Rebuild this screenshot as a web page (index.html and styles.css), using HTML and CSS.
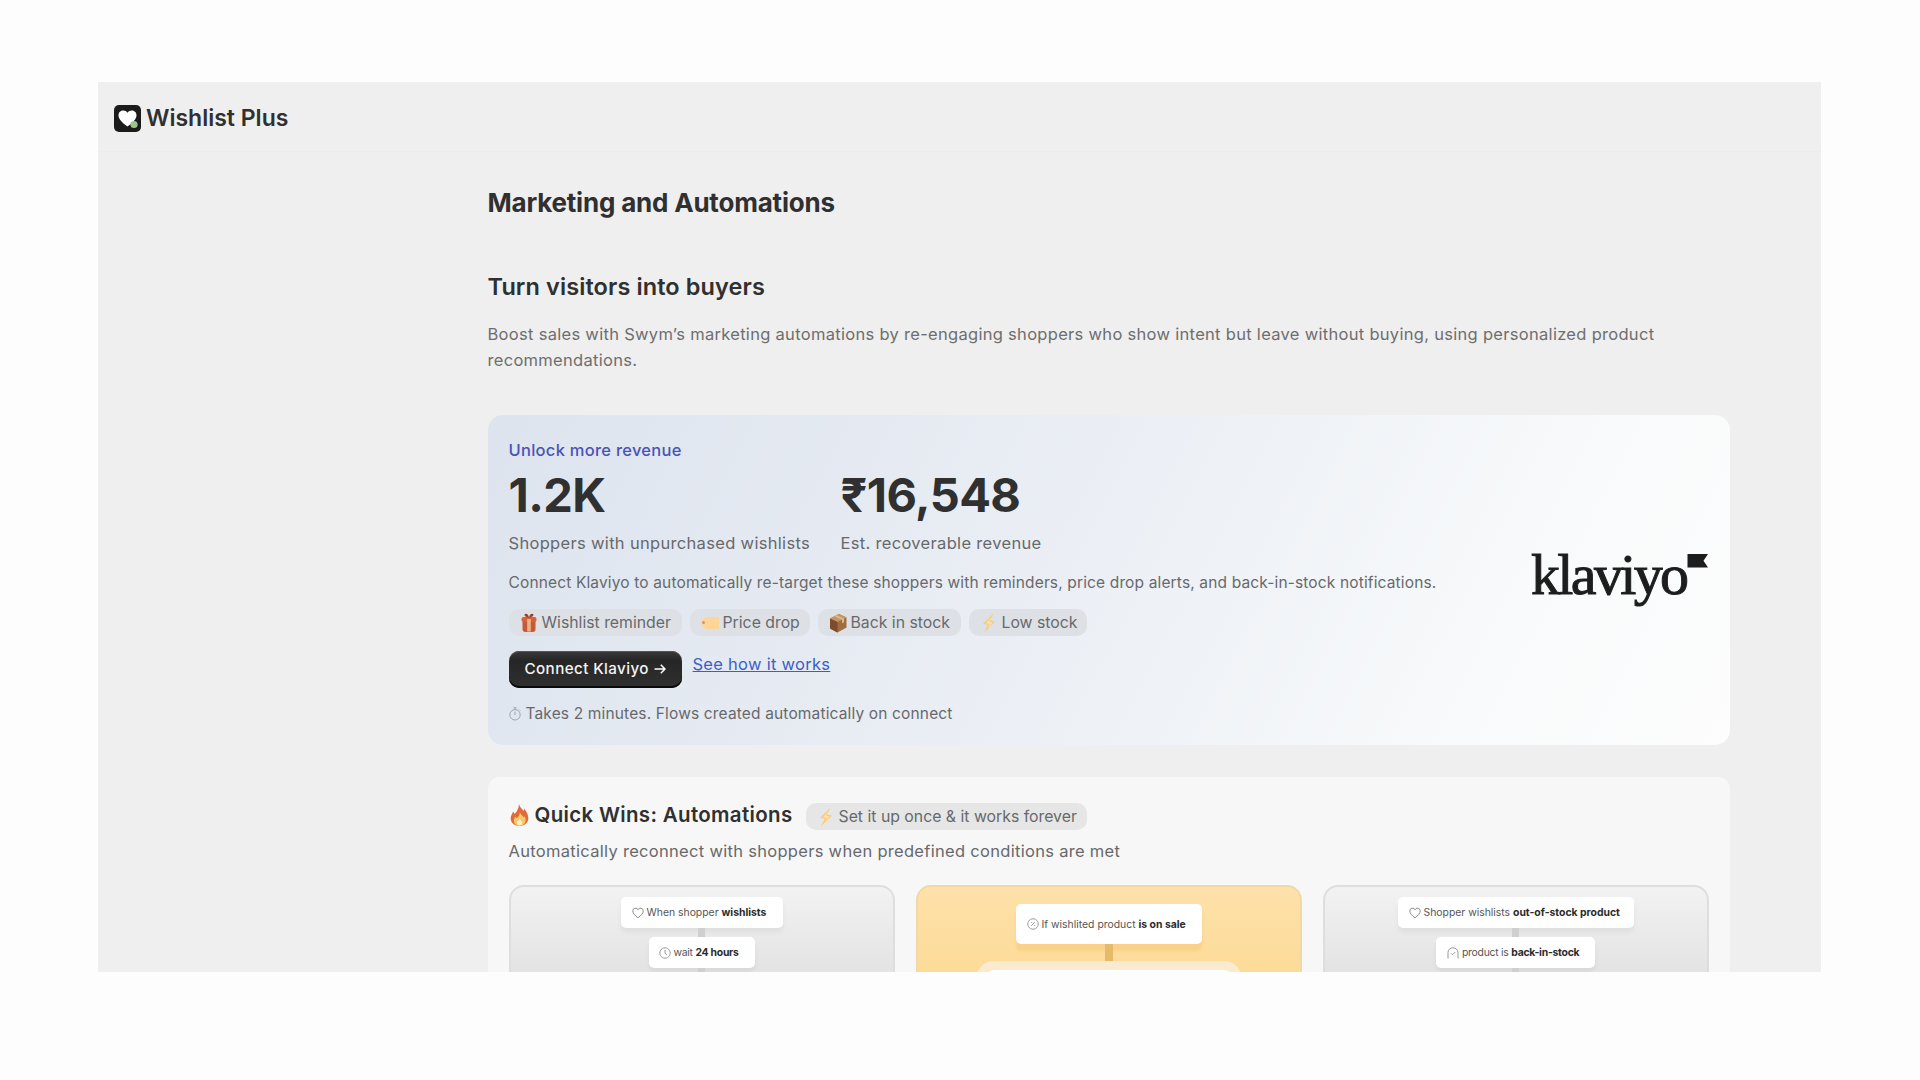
FILE: index.html
```html
<!DOCTYPE html>
<html lang="en">
<head>
  <meta charset="UTF-8" />
  <meta name="viewport" content="width=device-width, initial-scale=1.0" />
  <title>Wishlist Plus</title>
  <link rel="stylesheet" href="styles.css">
</head>
<body>

  <svg class="sprite" width="0" height="0">
    <symbol id="bolt" viewBox="0 0 16 20">
      <path d="M12.5 .5 2 10.8l4.8 1L3 19.5 14 8.6l-4.9-1z" fill="#fbc97c" />
      <path d="M11 3 5 10.2l3.600.7-2 4.600 5-6.300-3.800-.8z" fill="#fde2a6" />
    </symbol>
    <symbol id="heart" viewBox="0 0 12 12">
      <path d="M6 10.800C2.500 8.200.8 6.200.8 3.900A2.700 2.700 0 0 1 6 2.800a2.700 2.700 0 0 1 5.200 1.100c0 2.300-1.700 4.300-5.200 6.900z" fill="none" stroke="#8d8d8d" />
    </symbol>
  </svg>

  <div class="window">
    <header class="topbar">
      <svg class="app-logo" viewBox="0 0 27 27">
        <rect width="27" height="27" rx="5" fill="#1b1b1b" />
        <path d="M13.500 21.500C8 17.500 4.500 14 4.500 10.200c0-5.400 6.800-6.200 9-2.500 2.200-3.700 9-2.900 9 2.500 0 3.800-3.500 7.300-9 11.300z" fill="#fff" />
        <circle cx="20" cy="19.500" r="3.600" fill="#9cc48c" />
      </svg>
      <span class="app-name">Wishlist Plus</span>
    </header>

    <main class="content">
      <h1>Marketing and Automations</h1>
      <h2>Turn visitors into buyers</h2>
      <p class="intro">Boost sales with Swym’s marketing automations by re-engaging shoppers who show intent but leave without buying, using personalized product recommendations.</p>

      <section class="hero">
        <div class="hero-body">
          <div class="eyebrow">Unlock more revenue</div>
          <div class="stats">
            <div class="stat">
              <div class="stat-value">1.2K</div>
              <div class="stat-label">Shoppers with unpurchased wishlists</div>
            </div>
            <div class="stat">
              <div class="stat-value">₹16,548</div>
              <div class="stat-label">Est. recoverable revenue</div>
            </div>
          </div>
          <p class="hero-text">Connect Klaviyo to automatically re-target these shoppers with reminders, price drop alerts, and back-in-stock notifications.</p>
          <div class="chips">
            <div class="chip chip-gift">
              <svg viewBox="0 0 18 20">
                <rect x="2.500" y="6" width="13" height="13" rx="3" fill="#c65a38" />
                <rect x="1.500" y="4" width="15" height="5" rx="2" fill="#d4633c" />
                <rect x="7.200" y="6" width="3.600" height="12.500" fill="#e9b485" />
                <path d="M9 4.500C4 4.500 3.500.8 6 .8c1.600 0 2.600 1.800 3 3.700.4-1.900 1.400-3.700 3-3.700 2.500 0 2 3.700-3 3.700z" fill="#9e3d22" />
              </svg>
              <span>Wishlist reminder</span>
            </div>
            <div class="chip chip-tag">
              <svg viewBox="0 0 18 20">
                <path d="M5 4h11.500q1.500 0 1.500 1.500v9q0 1.500-1.500 1.500H5L.5 12V8z" fill="#fdd596" />
                <circle cx="2.500" cy="9.500" r="1.500" fill="#e5925e" />
              </svg>
              <span>Price drop</span>
            </div>
            <div class="chip chip-box">
              <svg viewBox="0 0 18 20">
                <path d="M1 5.500 10 1l7.500 3.500v10L8.500 19.500 1 15.500z" fill="#a06c40" />
                <path d="M1 5.500 10 1l7.500 3.500-9 4.500z" fill="#c79563" />
                <path d="M8.500 9v10.500L1 15.500v-10z" fill="#7b4d2e" />
                <path d="m5.500 3.300 7.600 3.500v3.500l2-1V5.700L7.700 2.200z" fill="#dfb988" />
              </svg>
              <span>Back in stock</span>
            </div>
            <div class="chip chip-low">
              <svg viewBox="0 0 16 20"><use href="#bolt" /></svg>
              <span>Low stock</span>
            </div>
          </div>
          <div class="actions">
            <div class="button">
              <span>Connect Klaviyo</span>
              <svg viewBox="0 0 12 12"><path d="M.5 6h10.500M6.800 1.800 11 6l-4.200 4.200" fill="none" stroke="#fff" stroke-width="1.500" /></svg>
            </div>
            <a class="link" href="#">See how it works</a>
          </div>
          <div class="note">
            <svg viewBox="0 0 12 14">
              <circle cx="6" cy="7.800" r="5.200" fill="none" stroke="#9a9da1" stroke-width=".9" />
              <path d="M6 4.500v3.500M4.500 .8h3M6 .8v1.800M10.200 2.600l1 1" fill="none" stroke="#9a9da1" stroke-width=".9" />
            </svg>
            <span>Takes 2 minutes. Flows created automatically on connect</span>
          </div>
        </div>
        <svg class="klaviyo" viewBox="0 -10 180 80">
          <text x="2" y="50" textLength="158" lengthAdjust="spacing">klaviyo</text>
          <path d="M158.500 10H179l-4.500 6.800 4.500 6.800h-20.500z" />
        </svg>
      </section>

      <section class="wins">
        <div class="wins-head">
          <svg class="fire" viewBox="0 0 18 22">
            <path d="M8.500 0c.8 3.500 3 4.500 4.500 7 .6-.8.700-1.700.6-2.600 2.400 2.800 4.400 6.600 4.200 10.200-.2 4.400-3.800 7.400-8.800 7.400S.2 19 .2 14.600C.2 11.500 1.700 9.700 2.800 7.500c.7.800 1 1.700 1.200 2.600C6.800 7.500 8.200 4 8.500 0z" fill="#df6b3c" />
            <path d="M9.300 8c.6 2.800 3.200 3.500 4 5.500.5-.5.6-1 .6-1.500 1.300 2 1.600 4 .9 6-.9 2.500-3 3.800-5.800 3.800s-5.200-1.600-5.600-4.500c-.2-2 .6-3.500 1.600-4.800.2.800.600 1.300 1.100 1.800C8.200 12.800 9.500 11 9.300 8z" fill="#f9c66b" />
            <path d="M9.200 14.500c.5 1.500 2.300 2.200 2.300 4.200 0 1.800-1.100 2.800-2.500 2.800s-2.600-1-2.600-2.700c0-1.800 1.900-2.300 2.800-4.300z" fill="#fff0c0" />
          </svg>
          <h3>Quick Wins: Automations</h3>
          <div class="chip chip-forever">
            <svg viewBox="0 0 16 20"><use href="#bolt" /></svg>
            <span>Set it up once &amp; it works forever</span>
          </div>
        </div>
        <p class="wins-text">Automatically reconnect with shoppers when predefined conditions are met</p>

        <div class="flows">
          <div class="flow">
            <div class="step step-shopper">
              <svg viewBox="0 0 12 12"><use href="#heart" /></svg>
              <span>When shopper <b>wishlists</b></span>
            </div>
            <div class="line"></div>
            <div class="step step-wait">
              <svg viewBox="0 0 12 12"><path d="M6 .8a5.200 5.200 0 1 0 .01 0M6 3v3.200l1.800 1.600" fill="none" stroke="#8d8d8d" stroke-width=".9" /></svg>
              <span>wait <b>24 hours</b></span>
            </div>
            <div class="line"></div>
          </div>
          <div class="flow flow-sale">
            <div class="step step-sale">
              <svg viewBox="0 0 12 12"><path d="M6 .8a5.200 5.200 0 1 0 .01 0M4.200 7.800l3.600-3.600M4.300 4.500h.9M6.900 7.500h.9" fill="none" stroke="#8d8d8d" stroke-width=".9" /></svg>
              <span>If wishlited product <b>is on sale</b></span>
            </div>
            <div class="line"></div>
            <div class="glow"><div class="glow-inner"></div></div>
          </div>
          <div class="flow">
            <div class="step step-oos">
              <svg viewBox="0 0 12 12"><use href="#heart" /></svg>
              <span>Shopper wishlists <b>out-of-stock product</b></span>
            </div>
            <div class="line"></div>
            <div class="step step-back">
              <svg viewBox="0 0 12 12"><path d="M1 11.500V5.500a5 4.700 0 0 1 10 0v6M4 6.300l1.500 1.500L8.300 5" fill="none" stroke="#8d8d8d" stroke-width=".9" /></svg>
              <span>product is <b>back-in-stock</b></span>
            </div>
            <div class="line"></div>
          </div>
        </div>
      </section>
    </main>
  </div>

</body>
</html>
```
FILE: styles.css
```css
* {
  box-sizing: border-box;
}
body {
  margin: 0;
  padding: 82px 99px 108px 98px;
  height: 1080px;
  background-color: #fdfdfd;
  color: #303030;
  font-family: Inter, 'Liberation Sans', sans-serif;
  font-size: 16px;
  overflow: hidden;
}
h1, h2, h3, p {
  margin: 0;
}
span {
  white-space: nowrap;
}
svg {
  flex: none;
}
.sprite {
  display: block;
}
.window {
  height: 890px;
  background-color: #efefef;
  overflow: hidden;
}
.topbar {
  display: flex;
  align-items: center;
  gap: 5px;
  height: 70px;
  padding: 3px 16px 0;
  border-bottom: 1px solid #ececec;
}
.app-logo {
  width: 27px;
  height: 27px;
}
.app-name {
  font-size: 23px;
  font-weight: 600;
  line-height: 28px;
}
.content {
  width: 1242px;
  margin-left: 389.5px;
}
h1 {
  padding-top: 35px;
  font-size: 26px;
  font-weight: 700;
  letter-spacing: -0.2px;
  line-height: 32px;
}
h2 {
  padding-top: 53px;
  font-size: 23.5px;
  font-weight: 600;
  letter-spacing: 0.1px;
  line-height: 30px;
}
.intro {
  padding-top: 19px;
  color: #6e6e6e;
  font-size: 16.5px;
  letter-spacing: 0.3px;
  line-height: 26px;
}
.hero {
  display: flex;
  justify-content: space-between;
  height: 330px;
  margin-top: 42px;
  padding: 23px 21px;
  border-radius: 15px;
  background: linear-gradient(117deg, #dde4ee 0%, #e5eaf2 28%, #eef1f6 55%, #f8fafb 80%, #fdfdfd 100%);
}
.eyebrow {
  color: #4a53b8;
  font-size: 16.5px;
  font-weight: 500;
  letter-spacing: 0.27px;
  line-height: 24px;
}
.stats {
  display: flex;
}
.stat:first-child {
  width: 332px;
}
.stat-value {
  font-size: 47px;
  font-weight: 700;
  letter-spacing: -0.6px;
  line-height: 66px;
}
.stat-label {
  color: #67696c;
  font-size: 16.5px;
  letter-spacing: 0.32px;
  line-height: 31px;
}
.hero-text {
  padding-top: 11px;
  color: #67696c;
  font-size: 15.5px;
  letter-spacing: 0.145px;
  line-height: 26px;
}
.chips {
  display: flex;
  padding-top: 13px;
}
.chip {
  display: flex;
  align-items: center;
  height: 27px;
  padding-left: 11px;
  border-radius: 10px;
  background-color: #dde1e6;
  color: #67696c;
  font-size: 15.8px;
}
.chip svg {
  width: 18px;
  height: 20px;
  margin-right: 4px;
}
.chip-gift {
  width: 173px;
}
.chip-tag {
  width: 120px;
  margin-left: 8px;
}
.chip-box {
  width: 143px;
  margin-left: 8px;
}
.chip-low {
  width: 118px;
  margin-left: 8px;
}
.actions {
  display: flex;
  gap: 11px;
  padding-top: 15px;
}
.button {
  display: flex;
  align-items: center;
  gap: 5px;
  width: 173px;
  height: 37px;
  padding: 0 0 2px 16px;
  border-radius: 10px;
  background: linear-gradient(#3a3a3a, #262626 25%, #303030);
  box-shadow: inset 0 -2px 0 #0a0a0a, inset 0 1px 0 #555;
  color: #f4f4f4;
  font-size: 15.2px;
  font-weight: 500;
  letter-spacing: 0.4px;
}
.button svg {
  width: 12px;
  height: 12px;
}
.link {
  color: #3a5fc8;
  font-size: 16.5px;
  letter-spacing: 0.28px;
  line-height: 26px;
}
.note {
  display: flex;
  align-items: center;
  gap: 5px;
  padding-top: 14px;
  color: #67696c;
  font-size: 15.5px;
  letter-spacing: 0.15px;
  line-height: 24px;
}
.note svg {
  width: 12px;
  height: 14px;
}
.klaviyo {
  width: 180px;
  height: 80px;
  margin-top: 96px;
  fill: #1d1d1d;
}
.klaviyo text {
  font-family: 'Liberation Serif', serif;
  font-size: 58px;
  stroke: #1d1d1d;
  stroke-width: 1px;
}
.wins {
  height: 240px;
  margin-top: 32px;
  padding: 21px 20px 0 21px;
  border-radius: 12px;
  background-color: #f7f7f7;
}
.wins-head {
  display: flex;
  align-items: center;
  height: 34px;
}
.fire {
  width: 19px;
  height: 22px;
  margin: 0 6px 0 1px;
}
h3 {
  font-size: 20.5px;
  font-weight: 600;
  letter-spacing: 0.33px;
  line-height: 26px;
}
.chip-forever {
  width: 281px;
  margin: 3px 0 0 13px;
  background-color: #e6e6e6;
}
.wins-text {
  color: #67696c;
  font-size: 16.5px;
  letter-spacing: 0.3px;
  line-height: 38px;
}
.flows {
  display: grid;
  grid-template-columns: repeat(3, 386px);
  gap: 21px;
  margin-top: 15px;
}
.flow {
  display: flex;
  flex-direction: column;
  align-items: center;
  height: 140px;
  padding-top: 10px;
  border: 2px solid #dedede;
  border-radius: 15px;
  background: linear-gradient(#f2f2f2, #e4e4e4 80px);
}
.flow-sale {
  padding-top: 17px;
  border-color: #f1d8a6;
  background: linear-gradient(#fde1a9, #fddc9a 80px);
}
.step {
  display: flex;
  align-items: center;
  gap: 3px;
  height: 31px;
  padding-left: 11px;
  border-radius: 5px;
  background-color: #fff;
  box-shadow: 0 4px 5px rgba(0, 0, 0, .05);
  color: #555;
  font-size: 10.4px;
}
.step b {
  color: #2b2b2b;
}
.step svg {
  width: 12px;
  height: 12px;
}
.step-shopper {
  width: 162px;
}
.step-wait {
  width: 106px;
  padding-left: 10px;
  letter-spacing: -0.25px;
}
.step-sale {
  width: 186px;
  height: 40px;
  box-shadow: 0 7px 3px rgba(246, 190, 110, .4);
}
.step-oos {
  width: 236px;
}
.step-back {
  width: 159px;
  letter-spacing: -0.25px;
}
.line {
  width: 7px;
  height: 9px;
  background-color: #cfcfcf;
}
.flow-sale .line {
  width: 8px;
  height: 17px;
  background-color: #e5ba69;
}
.glow {
  width: 266px;
  height: 40px;
  padding: 9px 10px 0;
  border-radius: 18px;
  background-color: #f9ead0;
}
.glow-inner {
  height: 30px;
  border-radius: 8px;
  background-color: #fff;
}
```
